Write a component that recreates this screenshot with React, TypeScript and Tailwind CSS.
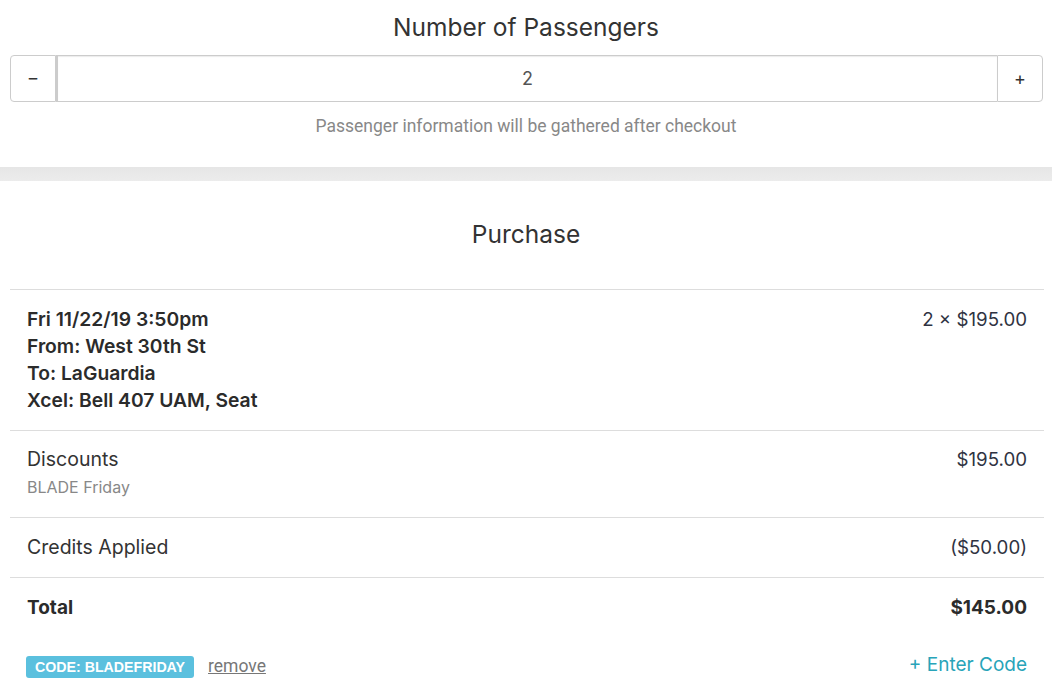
import React from "react";

export default function App() {
  const main = { fontFamily: "Inter, 'Noto Sans', sans-serif" } as React.CSSProperties;
  return (
    <div className="w-[1052px] h-[695px] bg-white overflow-hidden text-[#333]" style={main}>
      <div className="flex flex-col">
        <div className="h-[55px] flex items-center justify-center text-[24.5px] text-[#333] pb-[1px]">
          Number of Passengers
        </div>
        <div className="ml-[10px] mr-[9px] flex h-[47px]">
          <button className="w-[46px] border border-[#ccc] rounded-l-[4px] bg-white flex items-center justify-center text-[17px] text-[#333]">
            –
          </button>
          <div className="flex-1 border-y border-[#ccc] border-l-2 border-l-[#ccc] shadow-[inset_0_1px_1px_rgba(0,0,0,0.08)] flex items-center justify-center text-[18px] text-[#555]">
            2
          </div>
          <button className="w-[46px] border border-[#ccc] rounded-r-[4px] bg-white flex items-center justify-center text-[18px] text-[#333]">
            +
          </button>
        </div>
        <div
          className="mt-[12px] h-[24px] leading-[24px] text-center text-[17.5px] text-[#888]"
          style={{ fontFamily: "Roboto, 'Liberation Sans', sans-serif" }}
        >
          Passenger information will be gathered after checkout
        </div>
        <div className="h-[29px]" />
        <div className="h-[14px] bg-gradient-to-b from-[#e6e6e6] to-[#ececec]" />
        <div className="h-[108px] flex items-center justify-center text-[24.5px] text-[#333] pb-[2px]">
          Purchase
        </div>
        <div className="ml-[10px] mr-[8px] border-t border-[#ddd]">
          <div className="flex justify-between px-[17px] pt-[16px] pb-[16px] border-b border-[#ddd]">
            <div className="text-[19.3px] leading-[27px] font-semibold text-[#2b2b2b]">
              <div>Fri 11/22/19 3:50pm</div>
              <div>From: West 30th St</div>
              <div>To: LaGuardia</div>
              <div>Xcel: Bell 407 UAM, Seat</div>
            </div>
            <div className="text-[18.7px] leading-[27px] text-[#2f3342]">2 × $195.00</div>
          </div>
          <div className="flex justify-between px-[17px] pt-[15px] pb-[16px] border-b border-[#ddd]">
            <div>
              <div className="text-[19.5px] leading-[27px] text-[#333]">Discounts</div>
              <div className="text-[16px] leading-[28px] text-[#888]">BLADE Friday</div>
            </div>
            <div className="text-[18.7px] leading-[27px] text-[#2f3342]">$195.00</div>
          </div>
          <div className="flex justify-between px-[17px] py-[16px] border-b border-[#ddd]">
            <div className="text-[19.5px] leading-[27px] text-[#333]">Credits Applied</div>
            <div className="text-[18.7px] leading-[27px] text-[#2f3342]">($50.00)</div>
          </div>
          <div className="flex justify-between px-[17px] pt-[16px] pb-[16px]">
            <div className="text-[19px] leading-[27px] font-bold text-[#2b2b2b]">Total</div>
            <div className="text-[19px] leading-[27px] font-bold text-[#2b2b2b]">$145.00</div>
          </div>
          <div className="flex justify-between items-center px-[17px] mt-[13px] h-[30px]">
            <div className="flex items-center gap-[14px] pt-[3px]">
              <span
                className="bg-[#5bc0de] text-white font-bold text-[14.2px] leading-[22px] h-[22px] px-[9px] rounded-[3px] -ml-[1px]"
                style={{ fontFamily: "'Liberation Sans', Arial, sans-serif" }}
              >
                CODE: BLADEFRIDAY
              </span>
              <span
                className="underline text-[#777] text-[17.5px]"
                style={{ fontFamily: "Roboto, 'Liberation Sans', sans-serif" }}
              >
                remove
              </span>
            </div>
            <div className="text-[19px] text-[#28a4b9]">+ Enter Code</div>
          </div>
        </div>
      </div>
    </div>
  );
}
